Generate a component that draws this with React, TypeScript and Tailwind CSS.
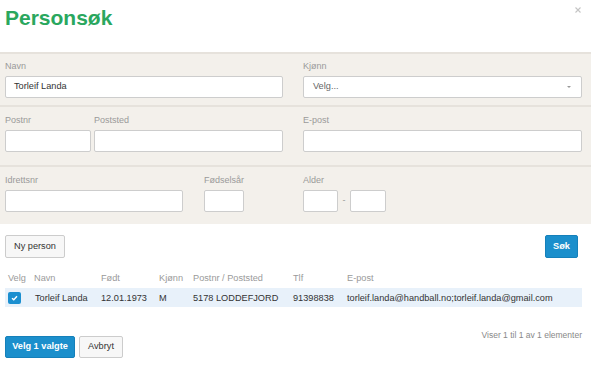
import React from "react";

const font = { fontFamily: '"Liberation Sans", Arial, Helvetica, sans-serif' };

function Label({ children }: { children: React.ReactNode }) {
  return <div className="text-[9px] leading-[11px] text-[#9a9a9a] mb-[4px]">{children}</div>;
}

function Input({ w, value, placeholder }: { w: string; value?: string; placeholder?: string }) {
  return (
    <div
      className={`${w} h-[22px] bg-white border border-[#cdcdcd] rounded-[2px] flex items-center px-[8px] text-[9.2px] text-[#333]`}
    >
      {value}
      {placeholder && <span className="text-[#666]">{placeholder}</span>}
    </div>
  );
}

export default function App() {
  return (
    <div style={font} className="w-[591px] h-[368px] bg-white relative overflow-hidden text-[#333]">
      {/* header */}
      <div className="h-[52px] pt-[6px] pl-[5px]">
        <h1 className="text-[21px] leading-[24px] font-bold text-[#2aa75e]">Personsøk</h1>
      </div>
      <svg className="absolute left-[575px] top-[7px]" width="6" height="6" viewBox="0 0 6 6">
        <path d="M0.5 0.5L5.5 5.5M5.5 0.5L0.5 5.5" stroke="#c4c4c4" strokeWidth="1.1" />
      </svg>

      {/* band 1 */}
      <div className="bg-[#f3f0eb] border-t-2 border-[#e6e2dc] pt-[7px] pb-[7px] pl-[5px] pr-[9px]">
        <div className="grid grid-cols-[278px_1fr] gap-x-[20px]">
          <div>
            <Label>Navn</Label>
            <Input w="w-full" value="Torleif Landa" />
          </div>
          <div>
            <Label>Kjønn</Label>
            <div className="w-full h-[22px] bg-white border border-[#cdcdcd] rounded-[2px] flex items-center justify-between pl-[9px] pr-[10px] text-[9.2px]">
              <span className="text-[#666]">Velg...</span>
              <svg width="4" height="2" viewBox="0 0 4 2">
                <path d="M0 0H4L2 2Z" fill="#999" />
              </svg>
            </div>
          </div>
        </div>
      </div>

      {/* band 2 */}
      <div className="bg-[#f3f0eb] border-t-2 border-[#e6e2dc] pt-[8px] pb-[13px] pl-[5px] pr-[9px]">
        <div className="grid grid-cols-[278px_1fr] gap-x-[20px]">
          <div className="flex gap-[3px]">
            <div>
              <Label>Postnr</Label>
              <Input w="w-[86px]" />
            </div>
            <div className="flex-1">
              <Label>Poststed</Label>
              <Input w="w-full" />
            </div>
          </div>
          <div>
            <Label>E-post</Label>
            <Input w="w-full" />
          </div>
        </div>
      </div>

      {/* band 3 */}
      <div className="bg-[#f3f0eb] border-t-2 border-[#e6e2dc] pt-[8px] pb-[12px] pl-[5px] pr-[9px]">
        <div className="grid grid-cols-[278px_1fr] gap-x-[20px]">
          <div className="flex gap-[21px]">
            <div>
              <Label>Idrettsnr</Label>
              <Input w="w-[178px]" />
            </div>
            <div>
              <Label>Fødselsår</Label>
              <Input w="w-[40px]" />
            </div>
          </div>
          <div>
            <Label>Alder</Label>
            <div className="flex items-center">
              <Input w="w-[35px]" />
              <span className="w-[12px] text-center text-[9px] text-[#999]">-</span>
              <Input w="w-[36px]" />
            </div>
          </div>
        </div>
      </div>

      {/* buttons */}
      <div className="flex justify-between pl-[5px] pr-[13px] mt-[11px]">
        <button className="w-[60px] h-[23px] border border-[#cccccc] bg-[#f7f7f7] rounded-[2px] text-[9.2px] text-[#333]">
          Ny person
        </button>
        <button className="w-[33px] h-[23px] border border-[#1580ba] bg-[#1b8fcc] rounded-[2px] text-[9.2px] font-bold text-white">
          Søk
        </button>
      </div>

      {/* table */}
      <div className="pl-[5px] pr-[9px] mt-[12px] text-[9.2px] leading-[10px]">
        <div className="flex h-[18px] items-end pb-[5px] text-[#9a9a9a]">
          <div className="w-[26px] pl-[3px]">Velg</div>
          <div className="w-[67px] pl-[3px]">Navn</div>
          <div className="w-[58px] pl-[3px]">Født</div>
          <div className="w-[34px] pl-[3px]">Kjønn</div>
          <div className="w-[100px] pl-[3px]">Postnr / Poststed</div>
          <div className="w-[54px] pl-[3px]">Tlf</div>
          <div className="flex-1 pl-[3px]">E-post</div>
        </div>
        <div className="flex h-[19px] items-center bg-[#e8f1fa] text-[#333]">
          <div className="w-[26px] pl-[3px] flex items-center">
            <div className="w-[13px] h-[12px] rounded-[2px] bg-[#1b8fd0] flex items-center justify-center">
              <svg width="7" height="6" viewBox="0 0 7 6">
                <path d="M1 3.2L2.8 4.8L6 1.2" fill="none" stroke="white" strokeWidth="1.4" />
              </svg>
            </div>
          </div>
          <div className="w-[67px] pl-[4px]">Torleif Landa</div>
          <div className="w-[58px] pl-[3px]">12.01.1973</div>
          <div className="w-[34px] pl-[3px]">M</div>
          <div className="w-[100px] pl-[3px]">5178 LODDEFJORD</div>
          <div className="w-[54px] pl-[3px]">91398838</div>
          <div className="flex-1 pl-[3px] whitespace-nowrap">torleif.landa@handball.no;torleif.landa@gmail.com</div>
        </div>
      </div>

      {/* footer */}
      <div className="flex justify-between items-start pl-[5px] pr-[9px] mt-[23px]">
        <div className="flex gap-[4px] mt-[6px]">
          <button className="w-[70px] h-[22px] border border-[#1580ba] bg-[#1b8fcc] rounded-[2px] text-[9.2px] font-bold text-white">
            Velg 1 valgte
          </button>
          <button className="w-[44px] h-[22px] border border-[#cccccc] bg-[#f7f7f7] rounded-[2px] text-[9.2px] text-[#333]">
            Avbryt
          </button>
        </div>
        <div className="text-[8.5px] leading-[10px] text-[#888]">Viser 1 til 1 av 1 elementer</div>
      </div>
    </div>
  );
}
